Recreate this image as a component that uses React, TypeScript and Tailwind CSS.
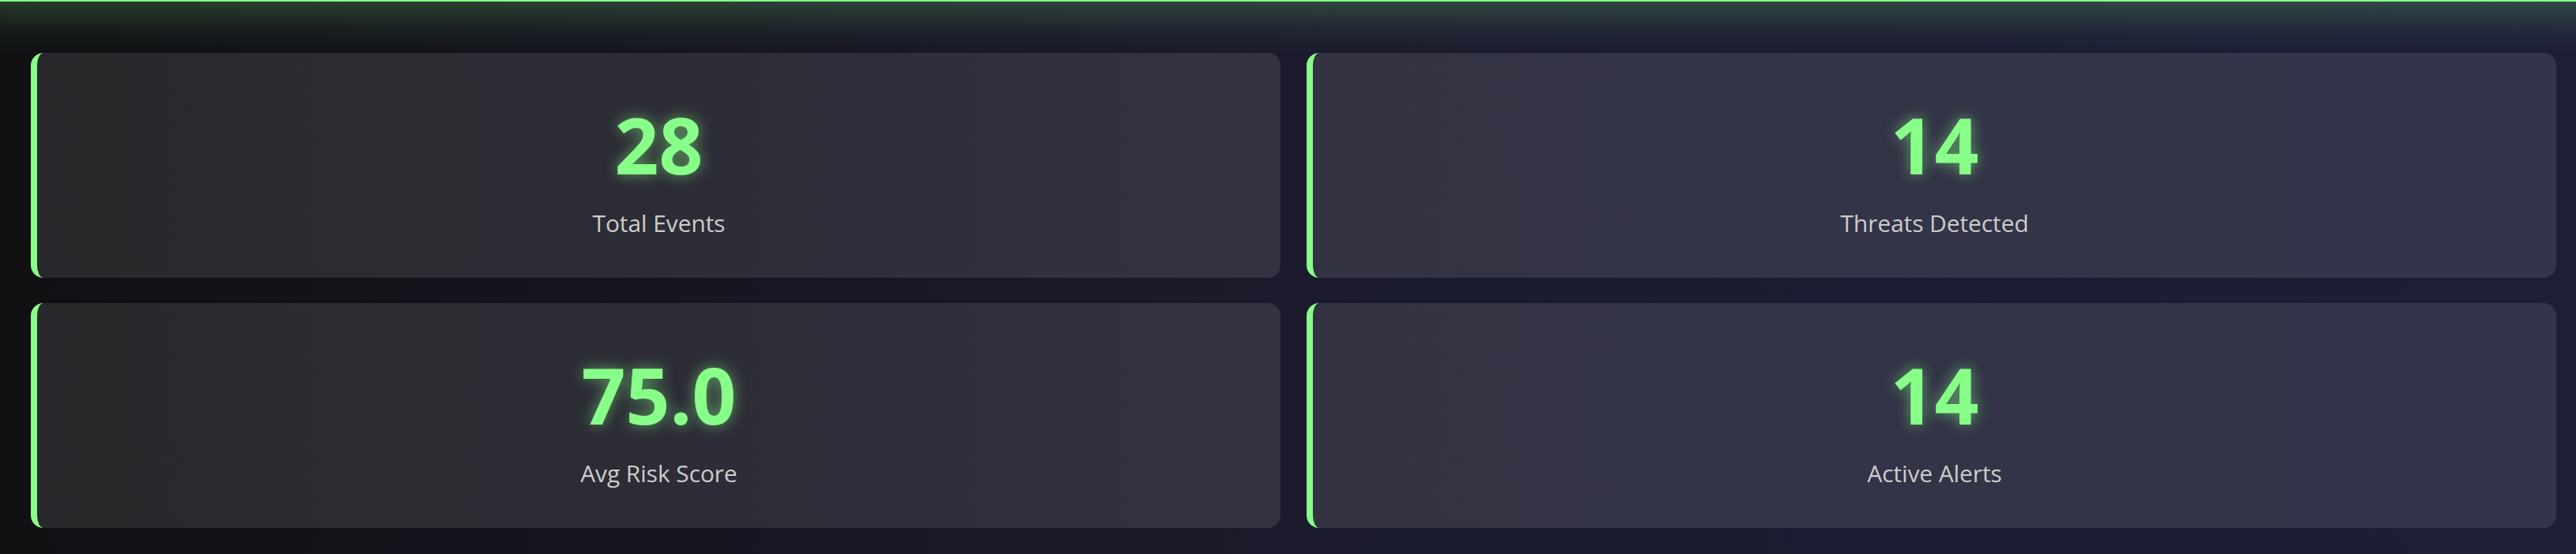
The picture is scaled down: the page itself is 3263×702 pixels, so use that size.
import React from 'react';

const stats = [
    { value: '28', label: 'Total Events' },
    { value: '14', label: 'Threats Detected' },
    { value: '75.0', label: 'Avg Risk Score' },
    { value: '14', label: 'Active Alerts' },
];

function StatCard({ value, label }: { value: string; label: string }) {
    return (
        <div className="h-[285px] rounded-2xl border-l-[8px] border-[#88ff88] bg-white/10 pt-[67px] pb-[54px] flex flex-col items-center">
            <div className="text-[98px] leading-none font-bold text-[#88ff88] [text-shadow:0_0_18px_rgba(136,255,136,0.55)]">
                {value}
            </div>
            <div className="mt-[36px] text-[30px] leading-none tracking-[-0.1px] text-[#cccccc]">{label}</div>
        </div>
    );
}

export default function App() {
    return (
        <div className="h-[702px] w-full bg-gradient-to-r from-[#101013] via-[#1b1b2d] to-[#1d1f38] font-['Segoe_UI','Open_Sans',sans-serif] overflow-hidden">
            {/* header edge + glow */}
            <div className="h-[2px] bg-[#88ff88]" />
            <div className="h-[65px] bg-gradient-to-b from-[rgba(136,255,136,0.18)] via-[rgba(136,255,136,0.04)] via-60% to-transparent" />

            <div className="grid grid-cols-2 gap-x-[33px] gap-y-[32px] pl-[39px] pr-[25px]">
                {stats.map((s) => (
                    <StatCard key={s.label} value={s.value} label={s.label} />
                ))}
            </div>
        </div>
    );
}
